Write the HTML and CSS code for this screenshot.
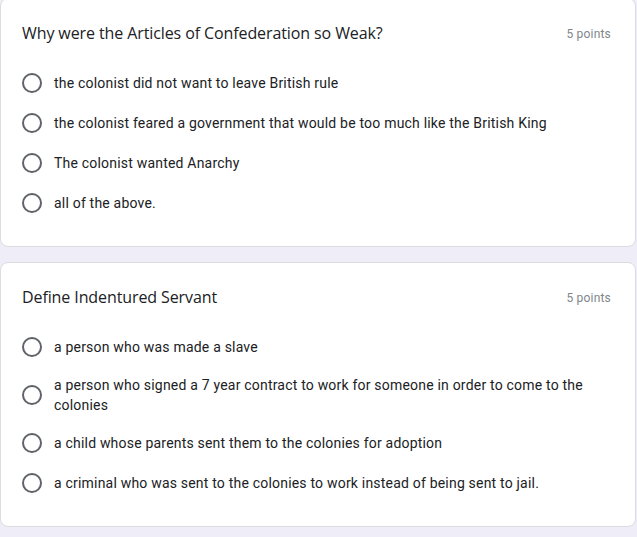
FILE: index.html
```html
<!DOCTYPE html>
<html>
<head>
<meta charset="utf-8">
<link rel="stylesheet" href="styles.css">
</head>
<body>
<div class="page">
  <div class="card first">
    <div class="head">
      <div class="title">Why were the Articles of Confederation so Weak?</div>
      <div class="points">5 points</div>
    </div>
    <div class="options">
      <div class="opt"><span class="radio"></span><span class="label">the colonist did not want to leave British rule</span></div>
      <div class="opt"><span class="radio"></span><span class="label">the colonist feared a government that would be too much like the British King</span></div>
      <div class="opt"><span class="radio"></span><span class="label">The colonist wanted Anarchy</span></div>
      <div class="opt"><span class="radio"></span><span class="label">all of the above.</span></div>
    </div>
  </div>
  <div class="card">
    <div class="head">
      <div class="title">Define Indentured Servant</div>
      <div class="points">5 points</div>
    </div>
    <div class="options">
      <div class="opt"><span class="radio"></span><span class="label">a person who was made a slave</span></div>
      <div class="opt"><span class="radio"></span><span class="label">a person who signed a 7 year contract to work for someone in order to come to the colonies</span></div>
      <div class="opt"><span class="radio"></span><span class="label">a child whose parents sent them to the colonies for adoption</span></div>
      <div class="opt"><span class="radio"></span><span class="label">a criminal who was sent to the colonies to work instead of being sent to jail.</span></div>
    </div>
  </div>
</div>
</body>
</html>
```
FILE: styles.css
```css
html, body {
  margin: 0;
  padding: 0;
  background: #efedf7;
}
body {
  font-family: Roboto, "Liberation Sans", sans-serif;
  color: #202124;
}
.page {
  display: flex;
  flex-direction: column;
  gap: 15px;
  padding-right: 1px;
  margin-top: -2px;
}
.card {
  background: #fff;
  border: 1px solid #dadce0;
  border-radius: 8px;
  padding: 22px 24px 23px 21px;
}
.head {
  display: flex;
  justify-content: space-between;
  align-items: center;
}
.title {
  font-family: "Open Sans", Roboto, sans-serif;
  font-size: 16px;
  line-height: 24px;
  letter-spacing: -0.1px;
  color: #202124;
}
.points {
  font-size: 12px;
  line-height: 16px;
  letter-spacing: 0.2px;
  color: #80868b;
  padding-top: 2px;
}
.options {
  margin-top: 18px;
  display: flex;
  flex-direction: column;
}
.opt {
  display: flex;
  align-items: center;
  padding: 8px 0;
  min-height: 24px;
  gap: 12px;
}
.radio {
  flex: none;
  width: 16px;
  height: 16px;
  border: 2px solid #5f6368;
  border-radius: 50%;
}
.label {
  font-size: 14px;
  line-height: 20px;
  letter-spacing: 0.2px;
  color: #202124;
  padding-right: 24px;
}
```
